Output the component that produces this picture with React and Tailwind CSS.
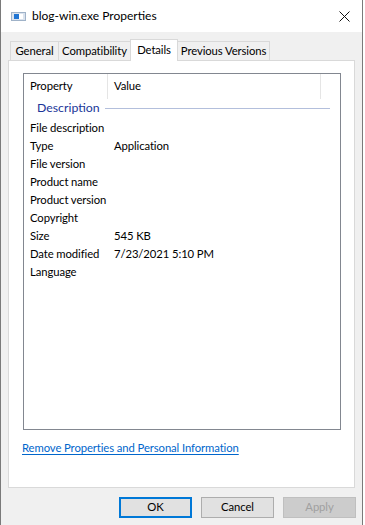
import React from 'react';

const rows = [
  ['File description', ''],
  ['Type', 'Application'],
  ['File version', ''],
  ['Product name', ''],
  ['Product version', ''],
  ['Copyright', ''],
  ['Size', '545 KB'],
  ['Date modified', '7/23/2021 5:10 PM'],
  ['Language', ''],
];

const tabs = [
  { label: 'General', w: 'w-[49px]' },
  { label: 'Compatibility', w: 'w-[73px]' },
  { label: 'Details', w: 'w-[48px]', active: true },
  { label: 'Previous Versions', w: 'w-[93px]' },
];

function AppIcon() {
  return (
    <svg width="15" height="9" viewBox="0 0 15 9" className="shrink-0">
      <rect x="0.5" y="0.5" width="14" height="8" fill="#dbe3ee" stroke="#9fb2c8" />
      <rect x="3" y="2" width="5" height="5" fill="#1f74d3" />
      <rect x="8" y="2" width="4" height="5" fill="#ffffff" />
    </svg>
  );
}

function CloseIcon() {
  return (
    <svg width="11" height="11" viewBox="0 0 11 11">
      <path d="M0.5 0.5 L10.5 10.5 M10.5 0.5 L0.5 10.5" stroke="#111" strokeWidth="1" />
    </svg>
  );
}

export default function App() {
  return (
    <div
      className="w-[365px] h-[525px] bg-white overflow-hidden text-[11.3px] tracking-[-0.1px] text-black"
      style={{ fontFamily: 'Lato, "Noto Sans", sans-serif' }}
    >
      <div className="w-[363px] h-[525px] border-x border-[#7a7a7a] bg-[#f0f0f0] flex flex-col">
        {/* title bar */}
        <div className="h-[32px] bg-white flex items-center pl-[10px] pr-[10px] shrink-0">
          <AppIcon />
          <span className="ml-[6px] text-[12px] tracking-normal">blog-win.exe Properties</span>
          <div className="ml-auto mr-[2px] flex items-center">
            <CloseIcon />
          </div>
        </div>

        {/* tabs */}
        <div className="flex items-end pl-[9px] h-[28px] shrink-0">
          {tabs.map((t) =>
            t.active ? (
              <div
                key={t.label}
                className={`${t.w} relative z-10 h-[22px] -mb-px -mr-px bg-white border border-b-0 border-[#d9d9d9] flex justify-center pt-[2px] leading-[16px]`}
              >
                {t.label}
              </div>
            ) : (
              <div
                key={t.label}
                className={`${t.w} h-[19px] bg-[#f0f0f0] border border-b-0 border-[#d9d9d9] -mr-px flex items-center justify-center leading-[16px]`}
              >
                {t.label}
              </div>
            )
          )}
        </div>

        {/* panel */}
        <div className="ml-[7px] w-[347px] h-[428px] bg-white border border-[#d9d9d9] pt-[12px] pl-[14px] shrink-0">
          <div className="w-[318px] h-[357px] border border-[#828790] flex flex-col">
            {/* header */}
            <div className="h-[25px] flex items-center shrink-0">
              <div className="w-[84px] h-full flex items-center pl-[6px] border-r border-[#e5e5e5]">Property</div>
              <div className="w-[213px] h-full flex items-center pl-[6px] border-r border-[#e5e5e5]">Value</div>
            </div>
            {/* group */}
            <div className="h-[20px] flex items-center pl-[13px] pr-[10px] pb-[2px]">
              <span className="text-[#1a3699] text-[12.3px] tracking-normal">Description</span>
              <div className="flex-1 ml-[5px] h-px bg-[#b3bfdc]" />
            </div>
            {rows.map(([k, v]) => (
              <div key={k} className="h-[18px] flex items-center">
                <div className="w-[90px] pl-[6px] whitespace-nowrap">{k}</div>
                <div className="whitespace-nowrap">{v}</div>
              </div>
            ))}
          </div>
          <div className="mt-[10px] ml-[-1px]">
            <span className="text-[#0066cc] underline underline-offset-2">
              Remove Properties and Personal Information
            </span>
          </div>
        </div>

        {/* buttons */}
        <div className="flex justify-end gap-[9px] pr-[6px] mt-[9px]">
          <button className="w-[73px] h-[21px] bg-[#e1e1e1] border-2 border-[#0078d7] flex items-center justify-center">
            OK
          </button>
          <button className="w-[73px] h-[21px] bg-[#e1e1e1] border border-[#adadad] flex items-center justify-center">
            Cancel
          </button>
          <button className="w-[73px] h-[21px] bg-[#cccccc] border border-[#bfbfbf] text-[#a0a0a0] flex items-center justify-center">
            Apply
          </button>
        </div>
      </div>
    </div>
  );
}
